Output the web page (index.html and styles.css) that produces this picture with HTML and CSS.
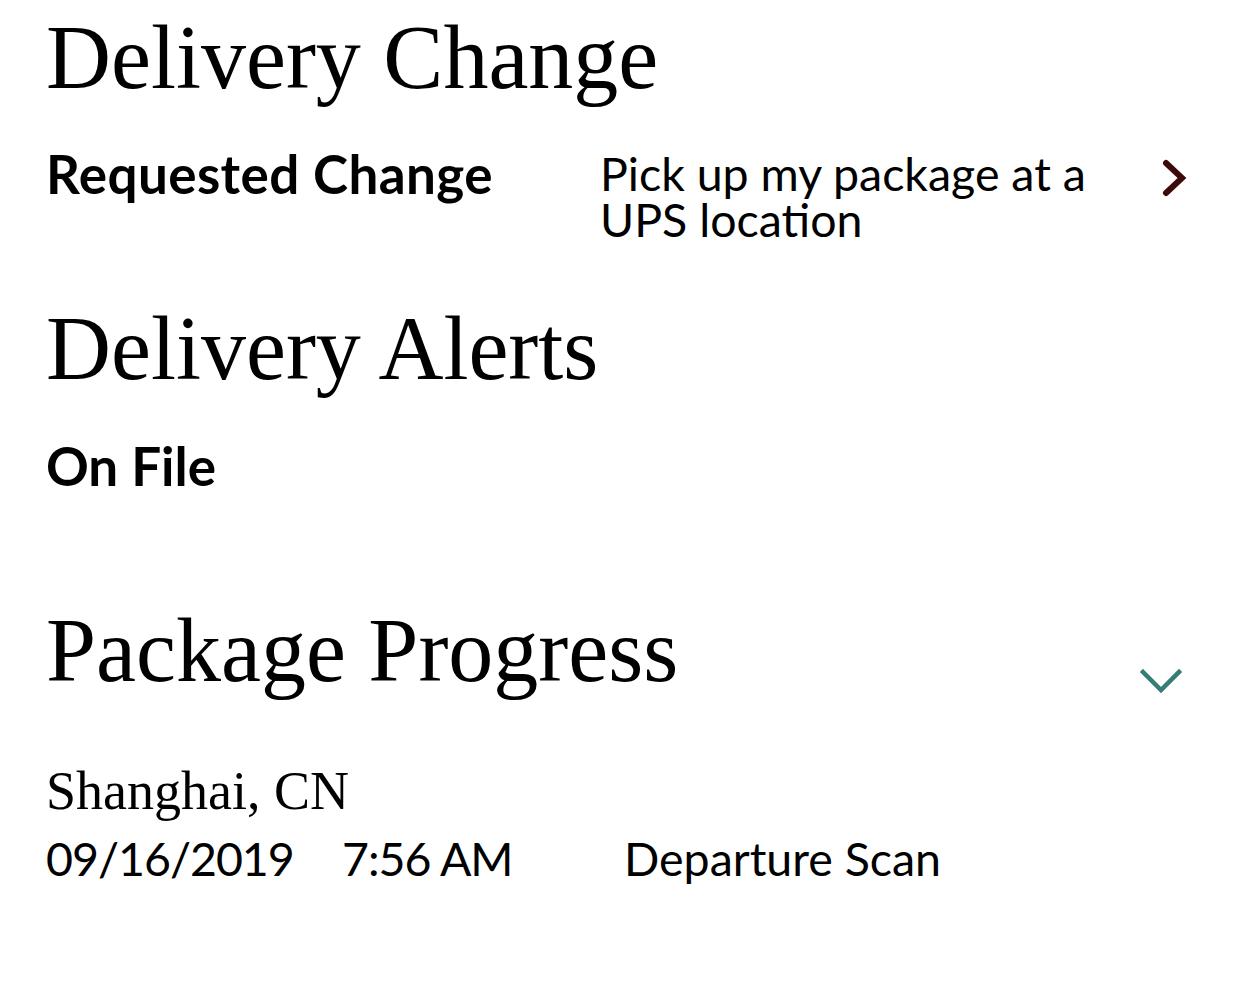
FILE: index.html
```html
<!DOCTYPE html>
<html>
<head>
<meta charset="utf-8">
<link rel="stylesheet" href="styles.css">
</head>
<body>
<main class="page">
  <section class="section">
    <h1 class="title">Delivery Change</h1>
    <div class="change-row">
      <div class="label">Requested Change</div>
      <div class="value">Pick up my package at a UPS location</div>
      <svg class="chev-right" width="30" height="44" viewBox="0 0 30 44"><path d="M7 7 L23 22 L7 37" fill="none" stroke="#3d0a0a" stroke-width="6" stroke-linecap="round" stroke-linejoin="miter"/></svg>
    </div>
  </section>
  <section class="section alerts">
    <h1 class="title">Delivery Alerts</h1>
    <div class="label onfile">On File</div>
  </section>
  <section class="section progress">
    <div class="progress-head">
      <h1 class="title">Package Progress</h1>
      <svg class="chev-down" width="44" height="30" viewBox="0 0 44 30"><path d="M4 6 L22 24 L40 6" fill="none" stroke="#357d77" stroke-width="4.5" stroke-linecap="square"/></svg>
    </div>
    <div class="city">Shanghai, CN</div>
    <div class="event">
      <span class="date">09/16/2019</span>
      <span class="time">7:56 AM</span>
      <span class="desc">Departure Scan</span>
    </div>
  </section>
</main>
</body>
</html>
```

FILE: styles.css
```css
* { box-sizing: border-box; }
html, body { margin: 0; padding: 0; background: #fff; }
body { color: #000; font-family: "Lato", "Open Sans", sans-serif; }
.page { padding: 0 47px 0 46px; }
.title {
  font-family: "Liberation Serif", serif;
  font-weight: 400;
  font-size: 90px;
  line-height: 100px;
  margin: 0;
}
.section:first-child .title { margin-top: 8px; }
.change-row {
  display: flex;
  align-items: flex-start;
  margin-top: 42px;
}
.label {
  font-weight: 700;
  font-size: 53px;
  line-height: 56px;
  flex: none;
}
.change-row .label { width: 554px; margin-top: -4px; letter-spacing: 0.4px; }
.value {
  font-size: 46.5px;
  line-height: 46px;
  width: 520px;
  flex: none;
}
.chev-right { margin-left: auto; margin-top: 6px; margin-right: 6px; }
.alerts { margin-top: 57px; }
.onfile { margin-top: 39px; }
.progress { margin-top: 107px; }
.progress-head { display: flex; align-items: flex-start; justify-content: space-between; }
.chev-down { margin-right: 12px; margin-top: 65px; }
.city {
  font-family: "Liberation Serif", serif;
  font-size: 54px;
  line-height: 66px;
  margin-top: 57px;
}
.event { display: flex; font-size: 46.5px; line-height: 60px; margin-top: 4px; }
.date { width: 296px; letter-spacing: -1px; }
.time { width: 282px; letter-spacing: -1px; }
```
